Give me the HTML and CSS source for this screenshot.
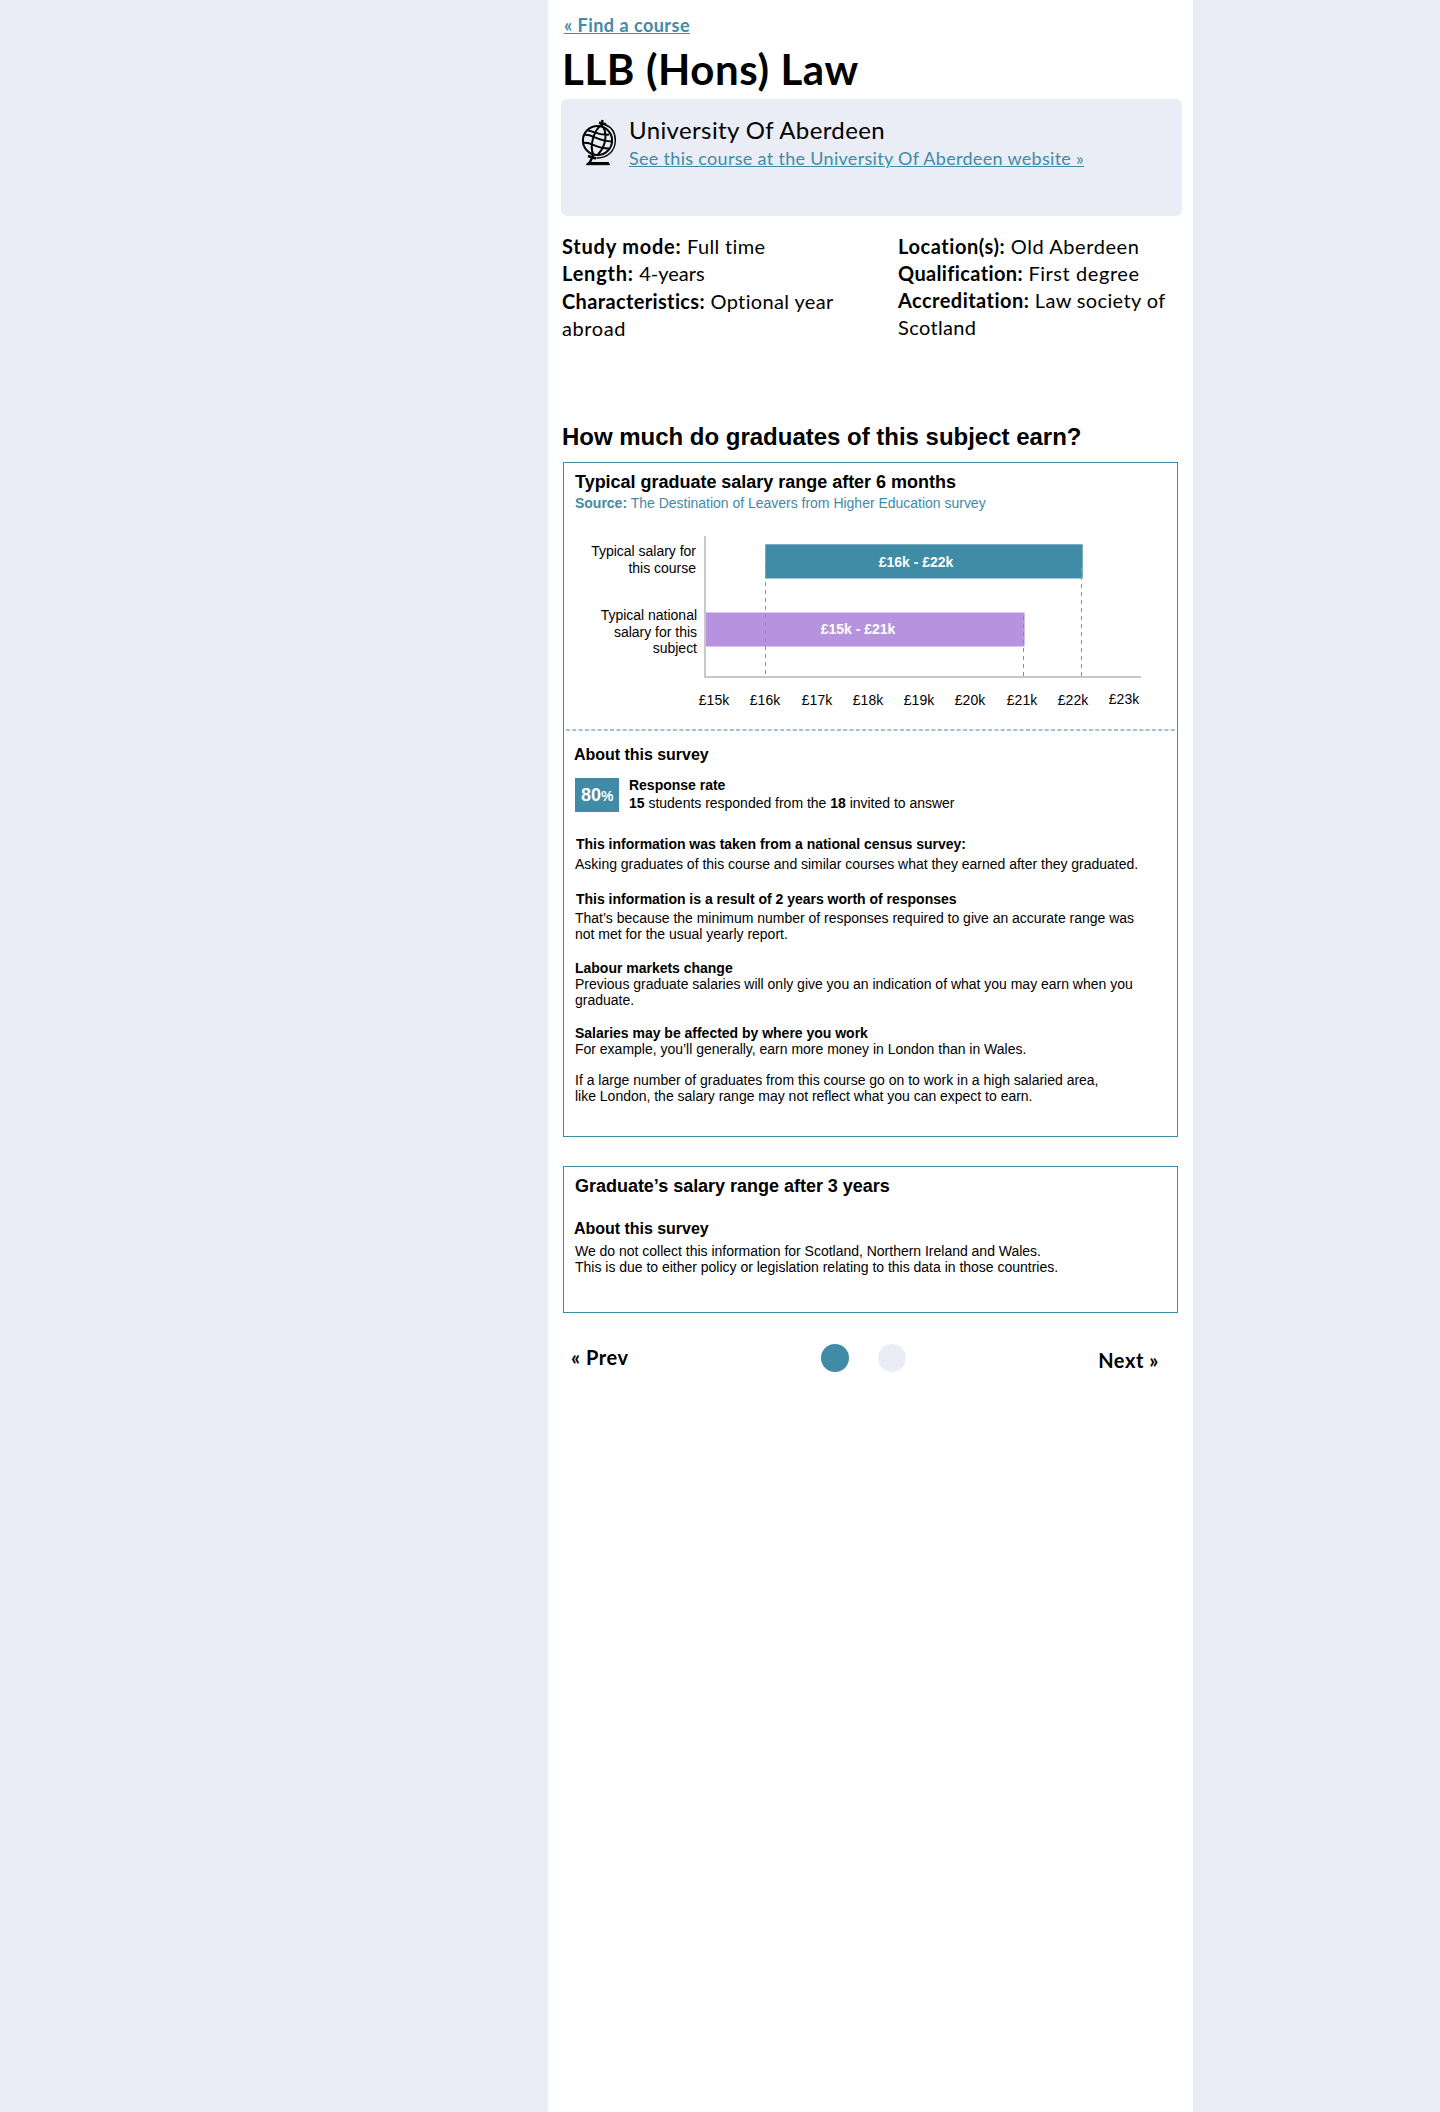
FILE: index.html
```html
<!DOCTYPE html>
<html lang="en">
<head>
<meta charset="utf-8">
<title>LLB (Hons) Law</title>
<link rel="stylesheet" href="styles.css">
</head>
<body>
<main class="page">
  <a class="back" href="#">« Find a course</a>
  <h1 class="title">LLB (Hons) Law</h1>
  <section class="provider">
    <svg class="globe" viewBox="0 0 36 48" fill="none" stroke="#000" stroke-width="2">
      <circle cx="16.5" cy="21.500" r="14.600"/>
      <path d="M3 16c8-1.500 12 6 28 6.500M2.300 24c8-1.500 13 6 26 5.500M20.500 6C13 11 8 27 12.500 36M20.500 6c6 6 5.500 20-3.500 29.500M7 11.500c5 .5 12 5.500 21 4"/>
      <path d="M23.500 5.500C31 8 34.500 14 34.300 22 34 33 25 39.500 15.500 39" stroke-width="1.400"/>
      <path d="M18 3.800l7 1.400M21.500 1l-1.500 7M12.500 35l-2 5-2 4M7 37l8 2.500" stroke-width="2.400"/>
      <path d="M5.500 45.700c.5-2 2-2.200 4-2.200h18l1 2.200z" fill="#000" stroke-width="1"/>
    </svg>
    <div class="provider-text">
      <p class="provider-name">University Of Aberdeen</p>
      <a class="provider-link" href="#">See this course at the University Of Aberdeen website »</a>
    </div>
  </section>
  <section class="facts">
    <div class="col-left">
      <p><b class="study">Study mode:</b> Full time</p>
      <p><b class="study">Length:</b> <span class="tight">4-years</span></p>
      <p class="late"><b>Characteristics:</b> Optional year<br><span class="wide">abroad</span></p>
    </div>
    <div class="col-right">
      <p><b class="wide">Location(s):</b> <span class="wide">Old Aberdeen</span></p>
      <p><b>Qualification:</b> <span class="wide">First degree</span></p>
      <p><b class="mid">Accreditation:</b> Law society of<br>Scotland</p>
    </div>
  </section>
  <h2 class="question">How much do graduates of this subject earn?</h2>

  <section class="panel panel-salary">
    <h3>Typical graduate salary range after 6 months</h3>
    <p class="source"><b>Source:</b> The Destination of Leavers from Higher Education survey</p>
    <svg class="chart" width="613" height="189" viewBox="564 522 613 189">
      <path d="M705 536V677M704 677H1141" stroke="#c8c8c8" stroke-width="2" fill="none"/>
      <rect x="765.300" y="544.300" width="317.400" height="34.200" fill="#408ba6"/>
      <rect x="706" y="612.500" width="318.600" height="34" fill="#b792de"/>
      <path d="M765.500 566V676M1023.500 616V676M1081.500 568V676" stroke="#8f8f8f" stroke-dasharray="4 4" fill="none"/>
      <g class="row-label">
        <text x="696" y="556">Typical salary for</text><text x="696" y="573">this course</text>
        <text x="697" y="620">Typical national</text><text x="697" y="637">salary for this</text><text x="697" y="653">subject</text>
      </g>
      <g class="value"><text x="916" y="567">£16k - £22k</text><text x="858" y="634">£15k - £21k</text></g>
      <g class="tick">
        <text x="714" y="705">£15k</text><text x="765" y="705">£16k</text><text x="817" y="705">£17k</text>
        <text x="868" y="705">£18k</text><text x="919" y="705">£19k</text><text x="970" y="705">£20k</text>
        <text x="1022" y="705">£21k</text><text x="1073" y="705">£22k</text><text x="1124" y="704">£23k</text>
      </g>
    </svg>
    <svg class="rule" width="613" height="2"><path d="M2 1H613" stroke="#80aed0" stroke-width="1.500" stroke-dasharray="4 2.300"/></svg>
    <h4>About this survey</h4>
    <div class="response">
      <div class="rate">80<small>%</small></div>
      <div><p><b>Response rate</b></p><p><b>15</b> students responded from the <b>18</b> invited to answer</p></div>
    </div>
    <p class="lead census"><b>This information was taken from a national census survey:</b></p>
    <p class="body-census">Asking graduates of this course and similar courses what they earned after they graduated.</p>
    <p class="lead years"><b>This information is a result of 2 years worth of responses</b></p>
    <p class="body-years">That’s because the minimum number of responses required to give an accurate range was<br>not met for the usual yearly report.</p>
    <p class="labour"><b>Labour markets change</b><br>Previous graduate salaries will only give you an indication of what you may earn when you<br>graduate.</p>
    <p class="where"><b>Salaries may be affected by where you work</b><br>For example, you’ll generally, earn more money in London than in Wales.</p>
    <p class="london">If a large number of graduates from this course go on to work in a high salaried area,<br>like London, the salary range may not reflect what you can expect to earn.</p>
  </section>

  <section class="panel panel-later">
    <h3>Graduate’s salary range after 3 years</h3>
    <h4>About this survey</h4>
    <p>We do not collect this information for Scotland, Northern Ireland and Wales.<br>This is due to either policy or legislation relating to this data in those countries.</p>
  </section>

  <nav class="pager">
    <a class="prev" href="#">« Prev</a>
    <span class="dots"><i class="dot active"></i><i class="dot"></i></span>
    <a class="next" href="#">Next »</a>
  </nav>
</main>
</body>
</html>
```

FILE: styles.css
```css
* { box-sizing: border-box; }
body { margin: 0; background: #eaedf5; color: #000; font: 14px/16px "Liberation Sans", Arial, sans-serif; }
h1, h2, h3, h4, p { margin: 0; }
.page { width: 645px; min-height: 2112px; margin-left: 548px; padding: 14px 11px 0 13px; background: #fff; }
.back, .title, .provider, .facts, .pager { font-family: Lato, sans-serif; }
.back { display: block; width: max-content; margin-left: 3px; font-size: 18px; line-height: 22px; font-weight: 700; letter-spacing: 0.48px; color: #408ba6; }
.title { margin: 8px 0 0 1px; font-size: 42px; line-height: 50px; font-weight: 700; letter-spacing: 0.6px; }
.provider { display: flex; height: 117px; margin-top: 5px; padding: 16px 20px; border-radius: 6px; background: #eaedf5; }
.globe { flex: none; width: 36px; height: 48px; margin-top: 4px; }
.provider-text { margin-left: 12px; white-space: nowrap; }
.provider-name { font-size: 24px; line-height: 29px; letter-spacing: 0.38px; }
.provider-link { display: block; margin-top: 3px; font-size: 18px; line-height: 22px; letter-spacing: 0.31px; color: #408ba6; }
.facts { display: grid; grid-template-columns: 336px 1fr; margin: 17px 0 0 1px; font-size: 20px; line-height: 27px; letter-spacing: 0.36px; white-space: nowrap; }
.facts .study { letter-spacing: 0.78px; }
.facts .wide { letter-spacing: 0.57px; }
.facts .mid { letter-spacing: 0.46px; }
.facts .tight { letter-spacing: 0; }
.facts .late { margin-top: 1px; }
.question { margin: 81px 0 0 1px; font-size: 24px; line-height: 27px; letter-spacing: -0.015px; white-space: nowrap; }
.panel { width: 615px; margin-left: 2px; border: 1px solid #408ba6; letter-spacing: -0.012px; white-space: nowrap; }
.panel > h3, .panel > p { margin-left: 11px; }
.panel > h3 { font-size: 18px; line-height: 20px; letter-spacing: -0.02px; }
.panel > h4 { margin-left: 10px; font-size: 16px; line-height: 18px; letter-spacing: -0.03px; }
.panel-salary { height: 675px; margin-top: 12px; padding-top: 9px; }
.source { margin-top: 3px; color: #408ba6; }
.chart, .rule { display: block; }
.chart { margin-top: 11px; }
.chart text { font-size: 14px; }
.row-label { text-anchor: end; }
.value, .tick { text-anchor: middle; }
.value { font-weight: 700; fill: #fff; }
.rule { margin-top: 18px; }
.panel-salary > h4 { margin-top: 15px; }
.response { display: flex; gap: 10px; margin: 14px 0 0 11px; height: 34px; }
.response p { margin-bottom: 2px; }
.response p:first-child { margin-top: -1px; }
.rate { width: 44px; height: 34px; padding-left: 6px; background: #408ba6; color: #fff; font: bold 18px/34px "Liberation Sans", Arial, sans-serif; }
.rate small { font-size: 14px; }
.panel > .lead { margin-left: 12px; }
.census { padding-top: 24px; }
.body-census { padding-top: 4px; }
.years { padding-top: 19px; }
.body-years { padding-top: 3px; }
.labour { padding-top: 18px; }
.where { padding-top: 17px; }
.london { padding-top: 15px; }
.panel-later { height: 147px; margin-top: 29px; padding-top: 9px; }
.panel-later > h4 { margin: 24px 0 5px 10px; }
.pager { display: flex; justify-content: space-between; margin-top: 30px; padding: 0 23px 0 10px; font-size: 20px; line-height: 24px; font-weight: 700; letter-spacing: 0.55px; }
.pager a { color: #000; text-decoration: none; }
.prev { padding-top: 2px; }
.next { padding-top: 5px; }
.dots { display: flex; gap: 29px; padding-top: 1px; }
.dot { width: 28px; height: 28px; border-radius: 50%; background: #eaedf5; }
.dot.active { background: #408ba6; }
```
